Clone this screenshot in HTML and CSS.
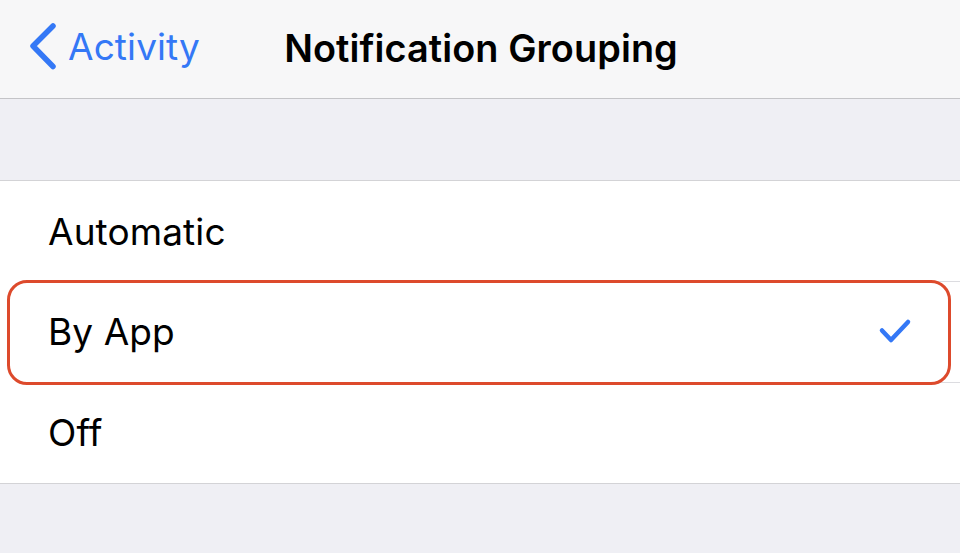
FILE: index.html
```html
<!DOCTYPE html>
<html>
<head>
<meta charset="utf-8">
<link rel="stylesheet" href="styles.css">
</head>
<body>
<header class="nav">
  <div class="back">
    <svg class="chev" width="34" height="52" viewBox="0 0 34 52"><path d="M26 5 L6 25 L26 45.5" fill="none" stroke="#3478f6" stroke-width="5.5" stroke-linecap="round" stroke-linejoin="round"/></svg>
    <span class="back-label">Activity</span>
  </div>
  <h1 class="title">Notification Grouping</h1>
</header>
<div class="gap"></div>
<ul class="list">
  <li class="row"><span class="label">Automatic</span></li>
  <li class="row selected"><span class="label">By App</span>
    <svg class="check" width="34" height="28" viewBox="0 0 34 28"><path d="M4 12.5 L13 22 L30 4" fill="none" stroke="#3478f6" stroke-width="4.5" stroke-linecap="round" stroke-linejoin="round"/></svg>
    <div class="highlight"></div>
  </li>
  <li class="row"><span class="label">Off</span></li>
</ul>
<div class="bottom"></div>
</body>
</html>
```
FILE: styles.css
```css
html, body {
  margin: 0;
  padding: 0;
  height: 100%;
  background: #efeff4;
  font-family: Inter, "Noto Sans", sans-serif;
  overflow: hidden;
}
.nav {
  height: 98px;
  background: #f7f7f8;
  border-bottom: 1px solid #c4c4c7;
  position: relative;
  display: flex;
  align-items: center;
  justify-content: center;
}
.back {
  position: absolute;
  left: 27px;
  top: 21px;
  display: flex;
  align-items: center;
  gap: 7px;
}
.back-label {
  color: #3478f6;
  font-size: 37px;
  letter-spacing: 0.1px;
  line-height: 52px;
}
.title {
  margin: 0;
  font-size: 37.8px;
  font-weight: 600;
  color: #000;
  letter-spacing: 0.1px;
  transform: translate(1px, -1px);
}
.gap {
  height: 81px;
}
.list {
  list-style: none;
  margin: 0;
  padding: 0;
  background: #fff;
  border-top: 1px solid #d3d3d6;
  border-bottom: 1px solid #d3d3d6;
}
.row {
  position: relative;
  height: 101px;
  display: flex;
  align-items: center;
  justify-content: space-between;
  padding: 0 48px 0 48px;
}
.row + .row::before {
  content: "";
  position: absolute;
  left: 48px;
  right: 0;
  top: 0;
  height: 1px;
  background: #dcdce0;
}
.row:first-child {
  height: 100px;
}
.selected {
  z-index: 2;
}
.label {
  font-size: 37px;
  color: #000;
  letter-spacing: 0.1px;
}
.highlight {
  position: absolute;
  left: 7px;
  right: 9px;
  top: -1px;
  bottom: -3px;
  border: 3.5px solid #dd4a2c;
  border-radius: 20px;
  pointer-events: none;
}
```
